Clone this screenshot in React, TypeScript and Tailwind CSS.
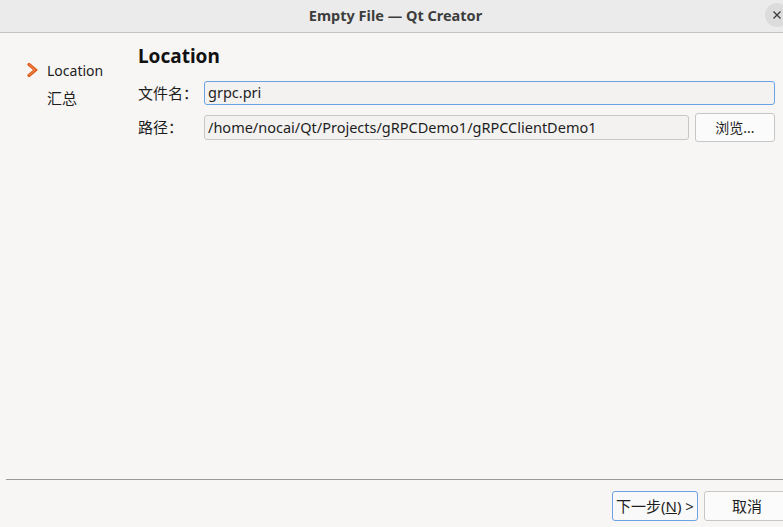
const font = { fontFamily: '"Noto Sans", "Noto Sans CJK SC", sans-serif' }

function Chevron() {
  return (
    <svg width="11" height="14" viewBox="0 0 11 14" className="mr-[9px]">
      <path d="M2 1.5 L8.5 7 L2 12.5" fill="none" stroke="#e05a1c" strokeWidth="3.2" strokeLinejoin="miter" strokeLinecap="round" />
      <path d="M2.3 1.8 L8 7 L2.3 12.2" fill="none" stroke="#f2955f" strokeWidth="1" strokeLinejoin="miter" strokeLinecap="round" />
    </svg>
  )
}

export default function App() {
  return (
    <div className="w-[783px] h-[527px] flex flex-col bg-[#f7f6f5] text-[#1e1e1e] overflow-hidden" style={font}>
      <div className="h-[33px] shrink-0 flex items-center justify-center relative bg-[#ebebeb] border-b border-[#c4c4c4]">
        <span className="text-[14.5px] font-bold text-[#3d3d3d] pl-[8px]">Empty File — Qt Creator</span>
        <div className="absolute left-[765px] top-[3px] w-[24px] h-[24px] rounded-full bg-[#dcdcdc] flex items-center justify-center">
          <svg width="10" height="10" viewBox="0 0 10 10">
            <path d="M1.5 1.5 L8.5 8.5 M8.5 1.5 L1.5 8.5" stroke="#3d3d3d" strokeWidth="1.4" />
          </svg>
        </div>
      </div>

      <div className="flex-1 flex">
        <div className="w-[138px] shrink-0 pt-[29px] pl-[27px] text-[14px]">
          <div className="flex items-center h-[16px]">
            <Chevron />
            <span>Location</span>
          </div>
          <div className="pl-[20px] mt-[12px] h-[16px] leading-[16px] text-[15px]">汇总</div>
        </div>

        <div className="flex-1 pr-[8px] pt-[11px]">
          <h1 className="text-[19px] font-bold leading-[24px] text-[#111]">Location</h1>
          <div className="mt-[13px] flex items-center text-[15px]">
            <span className="w-[66px] shrink-0">文件名：</span>
            <div className="flex-1 h-[24px] rounded-[3px] border border-[#6aa3e6] bg-[#f3f2f1] flex items-center px-[3px] text-[14.5px]">
              grpc.pri
            </div>
          </div>
          <div className="mt-[8px] flex items-center text-[15px]">
            <span className="w-[66px] shrink-0">路径：</span>
            <div className="flex-1 h-[25px] rounded-[3px] border border-[#c9c7c5] bg-[#f3f2f1] flex items-center px-[3px] text-[14.5px]">
              /home/nocai/Qt/Projects/gRPCDemo1/gRPCClientDemo1
            </div>
            <button className="ml-[6px] w-[80px] h-[29px] rounded-[3px] border border-[#c9c7c5] bg-[#fbfbfb] text-[14px]">
              浏览...
            </button>
          </div>
        </div>
      </div>

      <div className="ml-[6px] border-t border-[#9a9a9a]" />
      <div className="h-[47px] shrink-0 flex justify-end items-start pt-[11px] text-[15px]">
        <button className="w-[86px] h-[30px] rounded-[3px] border border-[#6aa3e6] bg-[#f9f9f9]">
          下一步(<span className="underline">N</span>) &gt;
        </button>
        <button className="ml-[6px] w-[86px] h-[30px] rounded-[3px] border border-[#c9c7c5] bg-[#fbfbfb] mr-[-7px]">
          取消
        </button>
      </div>
    </div>
  )
}
